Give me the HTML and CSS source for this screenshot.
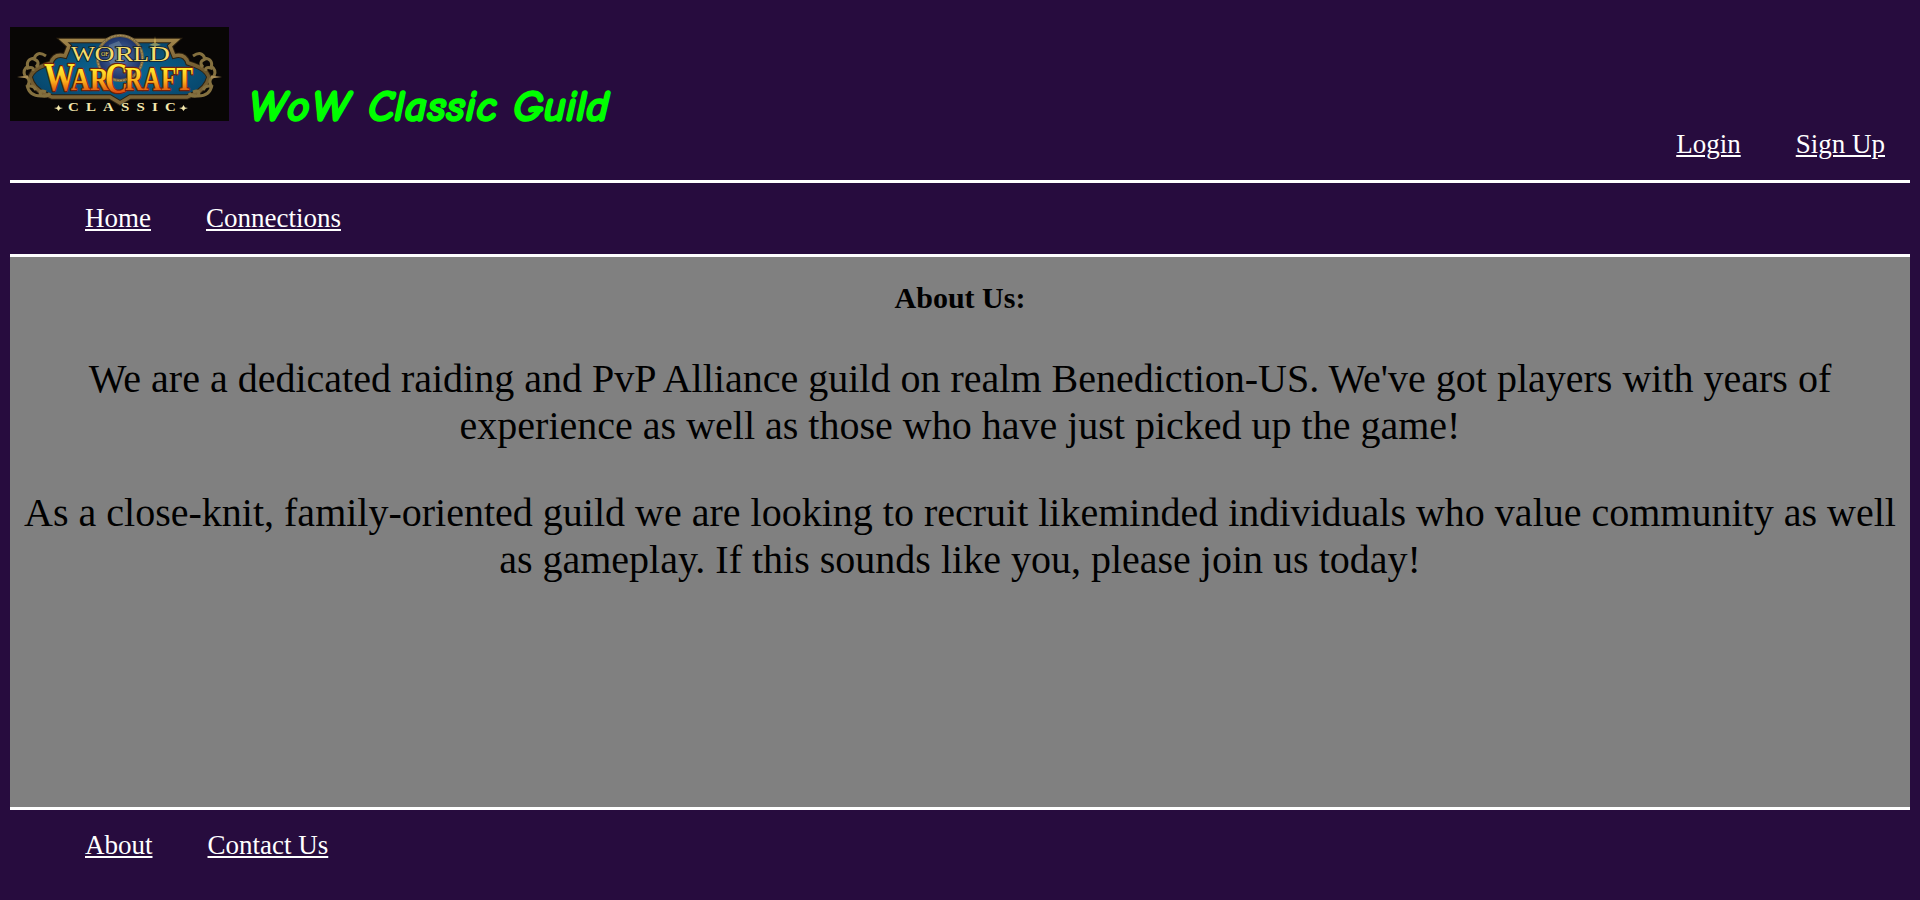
FILE: index.html
```html
<!DOCTYPE html>
<html lang="en">
<head>
<meta charset="utf-8">
<title>WoW Classic Guild</title>
<link rel="stylesheet" href="styles.css">
</head>
<body>
<header class="header">
  <svg class="logo" viewBox="0 0 219 94" role="img" aria-label="World of Warcraft Classic">
    <defs>
      <linearGradient id="gold" x1="0" y1="0" x2="0" y2="1"><stop offset="0" stop-color="#a0844a"/><stop offset=".5" stop-color="#6b552c"/><stop offset="1" stop-color="#80683a"/></linearGradient>
      <linearGradient id="fire" gradientUnits="userSpaceOnUse" x1="0" y1="36" x2="0" y2="66"><stop offset=".2" stop-color="#ffe92e"/><stop offset=".6" stop-color="#fbb01b"/><stop offset="1" stop-color="#dc480f"/></linearGradient>
      <radialGradient id="globe"><stop offset="0" stop-color="#5576a5"/><stop offset="1" stop-color="#1a2f66"/></radialGradient>
      <radialGradient id="sea" r=".6"><stop offset="0" stop-color="#0b6a98"/><stop offset="1" stop-color="#074266"/></radialGradient>
    </defs>
    <rect width="219" height="94" fill="#080605"/>
    <path d="M53 13.500H166L160 19L164 29Q175 26 178 36L184 38Q196 42 199 50Q196 62 184 67L177 70H120L110 76L100 70H42L35 67Q23 62 20 50Q23 42 35 38L41 36Q44 26 55 29L59 19Z" fill="url(#sea)" stroke="#2c2110" stroke-width="5.500"/>
    <path d="M53 13.500H166L160 19L164 29Q175 26 178 36L184 38Q196 42 199 50Q196 62 184 67L177 70H120L110 76L100 70H42L35 67Q23 62 20 50Q23 42 35 38L41 36Q44 26 55 29L59 19Z" fill="none" stroke="url(#gold)" stroke-width="3.500"/>
    <g fill="none" stroke="#84703f" stroke-width="3">
      <path id="scroll" d="M36 29Q27 23 24 32Q31 35 26 40M25 31Q15 32 18 41Q24 39 23 44M18 39Q12 43 15 49Q22 53 17 60Q23 57 26 63M17 58Q19 69 31 69Q28 62 36 65M29 68Q37 71 40 66"/>
      <use href="#scroll" transform="matrix(-1 0 0 1 219 0)"/>
    </g>
    <path d="M7 50L18 48.500V51.500ZM212 50L201 48.500V51.500Z" fill="#a78b55"/>
    <circle cx="110" cy="31" r="22.500" fill="url(#globe)" stroke="#7e693e" stroke-width="3"/>
    <circle cx="110" cy="31" r="22.500" fill="none" stroke="#b39b67" stroke-width="1" stroke-dasharray="2 1"/>
    <path d="M99 18L109 14L114 22L108 28L111 36L103 43L98 32Z" fill="#8aa3ad" opacity=".4"/>
    <text y="33.500" font-family="Liberation Serif, serif" font-size="20" fill="#f5dc6c" stroke="#15202a" stroke-width="1.500" paint-order="stroke"><tspan x="61" textLength="24" lengthAdjust="spacingAndGlyphs">W</tspan><tspan x="84.500" font-size="22" textLength="20" lengthAdjust="spacingAndGlyphs">O</tspan><tspan x="105" textLength="19" lengthAdjust="spacingAndGlyphs">R</tspan><tspan x="123" textLength="16" lengthAdjust="spacingAndGlyphs">L</tspan><tspan x="139" textLength="21" lengthAdjust="spacingAndGlyphs">D</tspan><tspan x="91" y="29" font-size="6">OF</tspan></text>
    <text y="63" font-family="Liberation Serif, serif" font-weight="bold" fill="url(#fire)" stroke="#74210a" stroke-width="2.500" stroke-linejoin="round" paint-order="stroke"><tspan x="34" font-size="40" textLength="31" lengthAdjust="spacingAndGlyphs">W</tspan><tspan x="61" font-size="32" textLength="38" lengthAdjust="spacingAndGlyphs">AR</tspan><tspan x="95" y="66" font-size="45" textLength="23" lengthAdjust="spacingAndGlyphs">C</tspan><tspan x="115" y="63" font-size="33" textLength="68" lengthAdjust="spacingAndGlyphs">RAFT</tspan></text>
    <text transform="scale(1.300 1)" x="44.600" y="84.500" font-family="Liberation Serif, serif" font-weight="bold" font-size="11.500" textLength="83" fill="#f3e7ac">CLASSIC</text>
    <path d="M44 81L47 80.500L48.500 78L50 80.500L53 81L50 82L48.500 84L47 82ZM169 81L172 80.500L173.500 78L175 80.500L178 81L175 82L173.500 84L172 82Z" fill="#f3e7ac"/>
    <path d="M145 9L146 16L151 18L146 19L145 24L144 19L139 18L144 16Z" fill="#ffdc62" opacity=".5"/>
  </svg>
  <h1 class="title"><span class="title-first">WoW</span> <span class="title-mid">Classic</span> <span class="title-last">Guild</span></h1>
  <nav class="account"><a href="#">Login</a><a href="#">Sign Up</a></nav>
</header>
<nav class="links main-nav"><a href="#">Home</a><a href="#">Connections</a></nav>
<main class="content">
  <h2 class="heading">About Us:</h2>
  <p class="text">We are a dedicated raiding and PvP Alliance guild on realm Benediction-US. We've got players with years of experience as well as those who have just picked up the game!</p>
  <p class="text">As a close-knit, family-oriented guild we are looking to recruit likeminded individuals who value community as well as gameplay. If this sounds like you, please join us today!</p>
</main>
<footer class="links footer"><a href="#">About</a><a href="#">Contact Us</a></footer>
</body>
</html>
```
FILE: styles.css
```css
* { box-sizing: border-box; }
html { background: #270c3e; }
body {
  margin: 0 10px;
  font: 27px/31px "Liberation Serif", "Times New Roman", serif;
  color: #000;
}
a { color: #fff; text-decoration: underline; text-underline-offset: 2px; text-decoration-thickness: 2px; }
.header { display: flex; align-items: flex-start; height: 183px; border-bottom: 3px solid #fff; }
.logo { display: block; width: 219px; height: 94px; margin-top: 27px; }
.title {
  display: flex;
  margin: 82px 0 0 20px;
  font: italic 700 44px/50px "Comic Sans MS", "Comic Neue", Lato, sans-serif;
  color: #0f0;
  -webkit-text-stroke: 1.6px #0f0;
  stroke-linejoin: round;
}
.title-first { width: 119px; letter-spacing: 2.4px; }
.title-mid { width: 145px; letter-spacing: 0.3px; }
.title-last { letter-spacing: -0.5px; }
.account { display: flex; gap: 55px; margin: 129px 25px 0 auto; }
.links { display: flex; gap: 55px; padding: 20px 0 0 75px; }
.main-nav { height: 74px; border-bottom: 3px solid #fff; }
.content { height: 553px; padding-top: 24px; background: #808080; border-bottom: 3px solid #fff; text-align: center; }
.heading { margin: 0 0 40px; font-size: 30px; line-height: 34px; }
.text { margin: 0 0 40px; font-size: 40px; line-height: 47px; }
.footer { height: 90px; }
```
